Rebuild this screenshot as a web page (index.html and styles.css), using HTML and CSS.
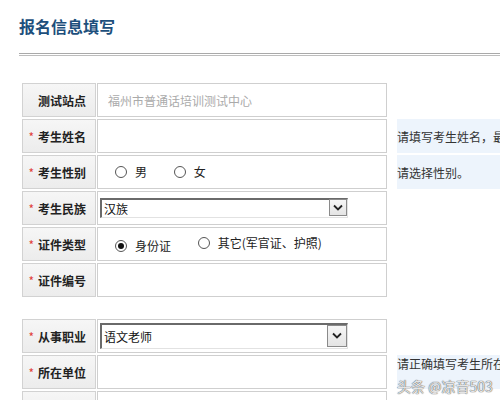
FILE: index.html
```html
<!DOCTYPE html>
<html lang="zh-CN">
<head>
<meta charset="utf-8">
<title>报名信息填写</title>
<link rel="stylesheet" href="styles.css">
</head>
<body>
<h1 class="title">报名信息填写</h1>
<div class="rule"></div>
<table class="form">
  <colgroup>
    <col class="c-label">
    <col class="c-value">
    <col class="c-gap">
    <col class="c-hint">
  </colgroup>
  <tr>
    <th class="label">测试站点</th>
    <td class="value"><span class="muted">福州市普通话培训测试中心</span></td>
    <td class="gap"></td>
    <td class="hint"></td>
  </tr>
  <tr>
    <th class="label"><span class="req">*</span>考生姓名</th>
    <td class="value"></td>
    <td class="gap"></td>
    <td class="hint tip">请填写考生姓名，最多20个字。</td>
  </tr>
  <tr>
    <th class="label"><span class="req">*</span>考生性别</th>
    <td class="value radios">
      <span class="opt"><span class="radio"></span>男</span>
      <span class="opt"><span class="radio"></span>女</span>
    </td>
    <td class="gap"></td>
    <td class="hint tip">请选择性别。</td>
  </tr>
  <tr>
    <th class="label"><span class="req">*</span>考生民族</th>
    <td class="value sel"><div class="select"><span class="sel-text">汉族</span><span class="arrow"><svg width="10" height="7" viewBox="0 0 10 7"><path d="M1 1.5 L5 5.5 L9 1.5" fill="none" stroke="#222" stroke-width="1.8"/></svg></span></div></td>
    <td class="gap"></td>
    <td class="hint"></td>
  </tr>
  <tr>
    <th class="label"><span class="req">*</span>证件类型</th>
    <td class="value radios">
      <span class="opt"><span class="radio checked"></span>身份证</span>
      <span class="opt"><span class="radio"></span>其它(军官证、护照)</span>
    </td>
    <td class="gap"></td>
    <td class="hint"></td>
  </tr>
  <tr>
    <th class="label"><span class="req">*</span>证件编号</th>
    <td class="value"></td>
    <td class="gap"></td>
    <td class="hint"></td>
  </tr>
  <tr class="spacer"><td colspan="4"></td></tr>
  <tr>
    <th class="label"><span class="req">*</span>从事职业</th>
    <td class="value sel"><div class="select tall"><span class="sel-text">语文老师</span><span class="arrow"><svg width="10" height="7" viewBox="0 0 10 7"><path d="M1 1.5 L5 5.5 L9 1.5" fill="none" stroke="#222" stroke-width="1.8"/></svg></span></div></td>
    <td class="gap"></td>
    <td class="hint"></td>
  </tr>
  <tr>
    <th class="label"><span class="req">*</span>所在单位</th>
    <td class="value"></td>
    <td class="gap"></td>
    <td class="hint tip top">请正确填写考生所在单位。</td>
  </tr>
  <tr>
    <th class="label"></th>
    <td class="value"></td>
    <td class="gap"></td>
    <td class="hint"></td>
  </tr>
</table>
<div class="watermark">头条 @凉音503</div>
</body>
</html>
```

FILE: styles.css
```css
html, body {
  margin: 0;
  padding: 0;
  width: 500px;
  height: 400px;
  overflow: hidden;
  background: #fff;
  font-family: "Noto Sans CJK SC", "Liberation Sans", sans-serif;
  color: #222;
}

.title {
  margin: 0;
  padding: 15px 0 0 19px;
  font-size: 16px;
  line-height: 22px;
  font-weight: bold;
  color: #1d4f7c;
}

.rule {
  margin: 16px 0 0 19px;
  height: 1px;
  border-top: 1px solid #a9a9a9;
  border-bottom: 1px solid #bdbdbd;
}

.form {
  margin: 25px 0 0 21px;
  width: 577px;
  table-layout: fixed;
  border-collapse: separate;
  border-spacing: 1px 2px;
  font-size: 12px;
}

.c-label { width: 74px; }
.c-value { width: 290px; }
.c-gap { width: 8px; }
.c-hint { width: 200px; }

.form tr {
  height: 34px;
}

.form .spacer {
  height: 18px;
}

.spacer td {
  padding: 0;
}

.label {
  box-sizing: border-box;
  padding: 0 9px 0 0;
  text-align: right;
  font-weight: bold;
  font-size: 12px;
  color: #222;
  white-space: nowrap;
  border: 1px solid #d2d2d2;
  background: linear-gradient(#f6f6f6, #ececec);
}

.req {
  color: #e0403a;
  font-weight: normal;
  margin-right: 4px;
}

.value {
  box-sizing: border-box;
  padding: 0 0 0 10px;
  border: 1px solid #cfcfcf;
  background: #fff;
  white-space: nowrap;
}

.muted {
  color: #aaa;
}

.radios {
  padding-left: 17px;
}

.opt {
  display: inline-flex;
  align-items: center;
  margin-right: 24px;
  color: #222;
}

.radio {
  display: inline-flex;
  align-items: center;
  justify-content: center;
  width: 10px;
  height: 10px;
  border: 1px solid #555;
  border-radius: 50%;
  background: #fff;
  margin-right: 8px;
}

.radio.checked::after {
  content: "";
  width: 6px;
  height: 6px;
  border-radius: 50%;
  background: #111;
}

.sel {
  padding-left: 2px;
}

.select {
  display: flex;
  align-items: center;
  width: 248px;
  height: 20px;
  box-sizing: border-box;
  border-top: 2px solid #6a6a6a;
  border-left: 2px solid #6a6a6a;
  border-bottom: 1px solid #e2e2e2;
  border-right: 1px solid #e2e2e2;
  background: #fff;
}

.select.tall {
  height: 26px;
}

.sel-text {
  flex: 1;
  padding-left: 2px;
  font-size: 12px;
  color: #111;
}

.arrow {
  display: flex;
  align-items: center;
  justify-content: center;
  width: 18px;
  height: 17px;
  box-sizing: border-box;
  border: 1px solid #8a8a8a;
  background: linear-gradient(#f6f6f6, #e4e4e4);
  margin-top: -2px;
}

.select.tall .arrow {
  height: 22px;
  width: 20px;
}

.gap {
  padding: 0;
}

.hint {
  padding: 0;
  white-space: nowrap;
  overflow: hidden;
  font-size: 12px;
  color: #333;
}

.hint.tip {
  background: #edf4fc;
}

.hint.top {
  vertical-align: top;
  line-height: 17px;
}

.watermark {
  position: absolute;
  left: 397px;
  top: 377px;
  font-size: 14px;
  line-height: 18px;
  color: rgba(255, 255, 255, 0.85);
  text-shadow: 0 0 1px #555, 0 0 1px #555;
  white-space: nowrap;
}
```
